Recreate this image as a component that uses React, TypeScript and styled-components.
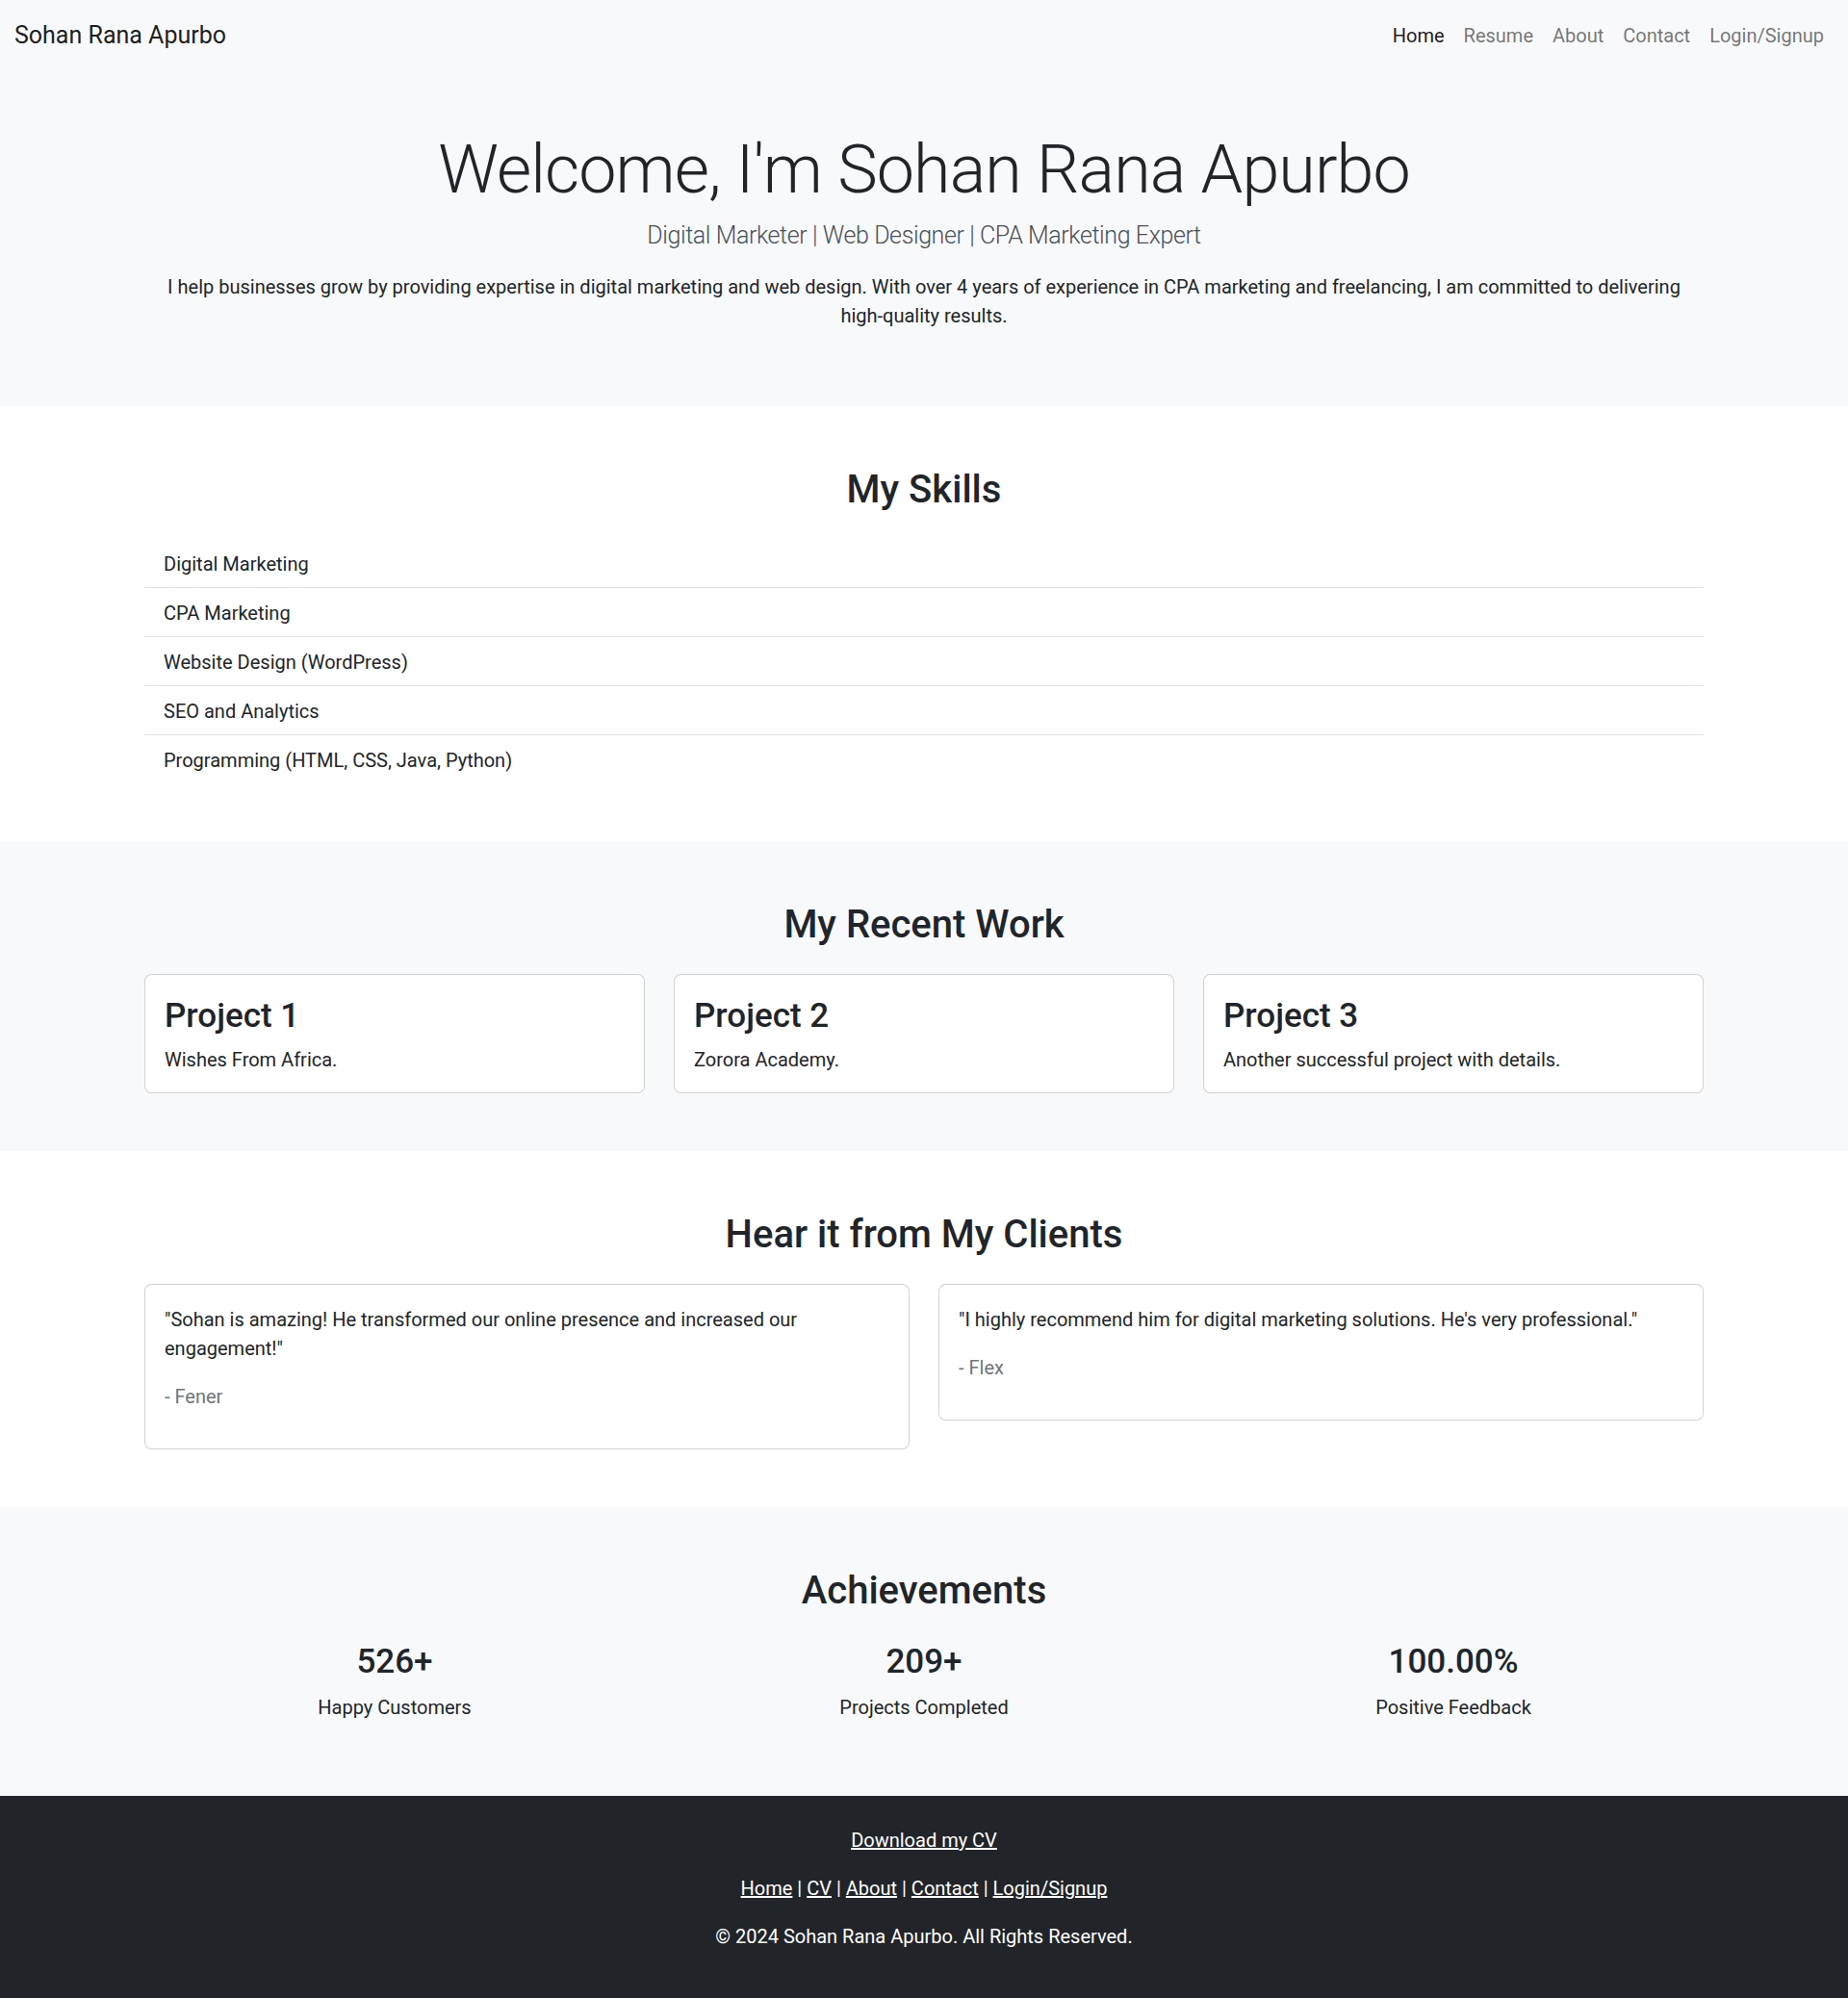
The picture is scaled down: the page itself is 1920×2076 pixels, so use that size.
import React from "react";
import styled, { createGlobalStyle } from "styled-components";

const FONT = `Roboto, "Liberation Sans", Arial, sans-serif`;

const GlobalStyle = createGlobalStyle`
  *, *::before, *::after { box-sizing: border-box; }
  body {
    margin: 0;
    font-family: ${FONT};
    font-size: 20px;
    line-height: 1.5;
    color: #212529;
    background: #fff;
  }
  p { margin: 0; }
  h1, h2, h3 { margin: 0; }
`;

const Navbar = styled.nav`
  display: flex;
  align-items: center;
  justify-content: space-between;
  padding: 10px 15px;
  background: #f8f9fa;
`;

const Brand = styled.a`
  font-size: 25px;
  line-height: 37.5px;
  padding: 8px 0 4.5px;
  color: rgba(0, 0, 0, 0.9);
  text-decoration: none;
`;

const NavList = styled.ul`
  display: flex;
  list-style: none;
  margin: 0;
  padding: 0;
`;

const NavLink = styled.a<{ $active?: boolean }>`
  display: block;
  padding: 11.5px 10px 8.5px;
  line-height: 30px;
  color: ${(p) => (p.$active ? "rgba(0,0,0,0.9)" : "rgba(0,0,0,0.55)")};
  text-decoration: none;
`;

const Section = styled.section<{ $light?: boolean }>`
  padding: 60px 0;
  background: ${(p) => (p.$light ? "#f8f9fa" : "#fff")};
`;

const Container = styled.div<{ $center?: boolean }>`
  max-width: 1650px;
  margin: 0 auto;
  padding: 0 15px;
  text-align: ${(p) => (p.$center ? "center" : "left")};
`;

const HeroTitle = styled.h1`
  font-size: 70px;
  font-weight: 300;
  line-height: 1.2;
  letter-spacing: -0.9px;
  padding-top: 4px;
  margin-bottom: 6px;
`;

const Lead = styled.p`
  font-size: 25px;
  font-weight: 300;
  line-height: 1.5;
  letter-spacing: -0.4px;
  color: #495057;
  padding-top: 2px;
  margin-bottom: 18px;
`;

const HeroText = styled.p`
  padding-top: 1.5px;
  margin-bottom: 18.5px;
`;

const SectionTitle = styled.h2`
  font-size: 40px;
  font-weight: 500;
  line-height: 1.2;
  text-align: center;
  padding-top: 3px;
  margin-bottom: 27px;
`;

const SkillList = styled.ul`
  list-style: none;
  margin: 0;
  padding: 0;
`;

const SkillItem = styled.li`
  padding: 11.5px 20px 8.5px;
  border-bottom: 1px solid #dee2e6;
  &:last-child { border-bottom: 0; }
`;

const CardGrid = styled.div<{ $cols: number }>`
  display: grid;
  grid-template-columns: repeat(${(p) => p.$cols}, 1fr);
  gap: 30px;
  align-items: start;
`;

const Card = styled.div`
  background: #fff;
  border: 1px solid rgba(0, 0, 0, 0.175);
  border-radius: 7.5px;
  padding: 21.5px 20px 18.5px;
`;

const CardTitle = styled.h3`
  font-size: 35px;
  font-weight: 500;
  line-height: 1.2;
  padding-top: 1px;
  margin-bottom: 9px;
`;

const QuoteText = styled.p`
  margin-bottom: 20px;
`;

const Author = styled.p`
  color: #6c757d;
  margin-bottom: 20px;
`;

const Stat = styled.div`
  text-align: center;
`;

const StatNumber = styled.h3`
  font-size: 35px;
  font-weight: 500;
  line-height: 1.2;
  padding-top: 2.5px;
  margin-bottom: 9px;
`;

const StatLabel = styled.p`
  padding-top: 1.5px;
  margin-bottom: 17px;
`;

const Footer = styled.footer`
  background: #212529;
  color: #fff;
  padding: 31.5px 0 28.5px;
  text-align: center;
`;

const FooterLine = styled.p`
  margin-bottom: 20px;
`;

const FooterLink = styled.a`
  color: #fff;
  text-decoration: underline;
`;

const skills = [
  "Digital Marketing",
  "CPA Marketing",
  "Website Design (WordPress)",
  "SEO and Analytics",
  "Programming (HTML, CSS, Java, Python)",
];

const projects = [
  { title: "Project 1", text: "Wishes From Africa." },
  { title: "Project 2", text: "Zorora Academy." },
  { title: "Project 3", text: "Another successful project with details." },
];

const testimonials = [
  {
    quote:
      "\"Sohan is amazing! He transformed our online presence and increased our engagement!\"",
    author: "- Fener",
  },
  {
    quote:
      "\"I highly recommend him for digital marketing solutions. He's very professional.\"",
    author: "- Flex",
  },
];

const stats = [
  { n: "526+", l: "Happy Customers" },
  { n: "209+", l: "Projects Completed" },
  { n: "100.00%", l: "Positive Feedback" },
];

export default function App() {
  return (
    <>
      <GlobalStyle />
      <Navbar>
        <Brand href="#">Sohan Rana Apurbo</Brand>
        <NavList>
          <li><NavLink $active href="#">Home</NavLink></li>
          <li><NavLink href="#">Resume</NavLink></li>
          <li><NavLink href="#">About</NavLink></li>
          <li><NavLink href="#">Contact</NavLink></li>
          <li><NavLink href="#">Login/Signup</NavLink></li>
        </NavList>
      </Navbar>

      <Section $light>
        <Container $center>
          <HeroTitle>Welcome, I'm Sohan Rana Apurbo</HeroTitle>
          <Lead>Digital Marketer | Web Designer | CPA Marketing Expert</Lead>
          <HeroText>
            I help businesses grow by providing expertise in digital marketing and web design. With over 4 years of experience in CPA marketing and freelancing, I am committed to delivering high-quality results.
          </HeroText>
        </Container>
      </Section>

      <Section>
        <Container>
          <SectionTitle>My Skills</SectionTitle>
          <SkillList>
            {skills.map((s) => (
              <SkillItem key={s}>{s}</SkillItem>
            ))}
          </SkillList>
        </Container>
      </Section>

      <Section $light>
        <Container>
          <SectionTitle>My Recent Work</SectionTitle>
          <CardGrid $cols={3}>
            {projects.map((p) => (
              <Card key={p.title}>
                <CardTitle>{p.title}</CardTitle>
                <p>{p.text}</p>
              </Card>
            ))}
          </CardGrid>
        </Container>
      </Section>

      <Section>
        <Container>
          <SectionTitle>Hear it from My Clients</SectionTitle>
          <CardGrid $cols={2}>
            {testimonials.map((t) => (
              <Card key={t.author}>
                <QuoteText>{t.quote}</QuoteText>
                <Author>{t.author}</Author>
              </Card>
            ))}
          </CardGrid>
        </Container>
      </Section>

      <Section $light>
        <Container>
          <SectionTitle>Achievements</SectionTitle>
          <CardGrid $cols={3}>
            {stats.map((s) => (
              <Stat key={s.l}>
                <StatNumber>{s.n}</StatNumber>
                <StatLabel>{s.l}</StatLabel>
              </Stat>
            ))}
          </CardGrid>
        </Container>
      </Section>

      <Footer>
        <FooterLine><FooterLink href="#">Download my CV</FooterLink></FooterLine>
        <FooterLine>
          <FooterLink href="#">Home</FooterLink> | <FooterLink href="#">CV</FooterLink> |{" "}
          <FooterLink href="#">About</FooterLink> | <FooterLink href="#">Contact</FooterLink> |{" "}
          <FooterLink href="#">Login/Signup</FooterLink>
        </FooterLine>
        <FooterLine>© 2024 Sohan Rana Apurbo. All Rights Reserved.</FooterLine>
      </Footer>
    </>
  );
}
